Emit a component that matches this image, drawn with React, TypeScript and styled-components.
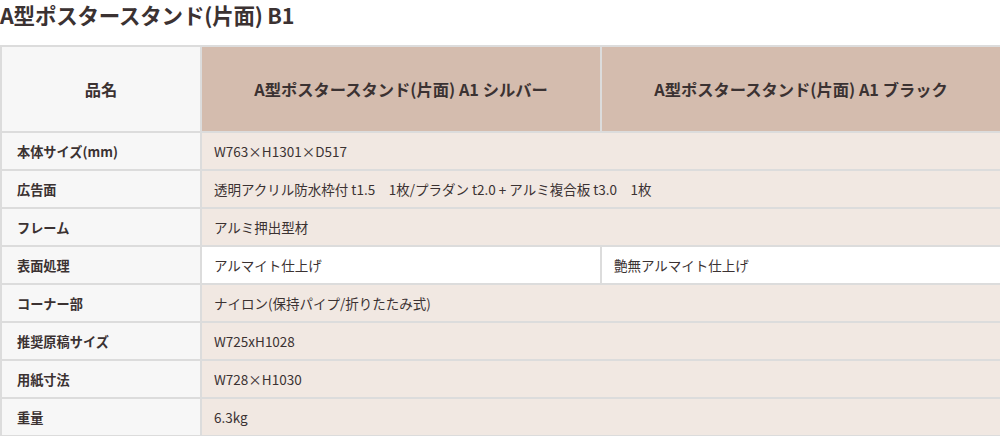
import React from 'react'
import { styled, createGlobalStyle } from 'styled-components'

const GlobalStyle = createGlobalStyle`
  body {
    margin: 0;
    background: #fff;
    font-family: "Noto Sans CJK JP", "Noto Sans", sans-serif;
    color: #3b3232;
  }
`

const Page = styled.div`
  width: 1000px;
`

const Title = styled.h2`
  margin: 0;
  height: 45px;
  font-size: 21.5px;
  font-weight: 700;
  line-height: 30px;
  letter-spacing: -0.2px;
`

const Table = styled.table`
  width: 1000px;
  border-collapse: collapse;
  table-layout: fixed;
  border: 2px solid #dcdcdc;
`

const HeadCell = styled.th<{ $label?: boolean }>`
  height: 84px;
  border: 2px solid #dcdcdc;
  background: ${p => (p.$label ? '#f7f7f7' : '#d4bcae')};
  font-size: 16.3px;
  font-weight: 700;
  text-align: center;
  padding: 0;
`

const Label = styled.th`
  height: 36px;
  border: 2px solid #dcdcdc;
  background: #f7f7f7;
  font-size: 13.2px;
  font-weight: 700;
  text-align: left;
  padding: 0 0 0 15px;
`

const Cell = styled.td<{ $plain?: boolean }>`
  border: 2px solid #dcdcdc;
  background: ${p => (p.$plain ? '#fff' : '#f1e8e2')};
  font-size: 13.5px;
  padding: 0 0 0 12px;
`

const rows: { label: string; values: string[] }[] = [
  { label: '本体サイズ(mm)', values: ['W763×H1301×D517'] },
  { label: '広告面', values: ['透明アクリル防水枠付 t1.5　1枚/プラダン t2.0 + アルミ複合板 t3.0　1枚'] },
  { label: 'フレーム', values: ['アルミ押出型材'] },
  { label: '表面処理', values: ['アルマイト仕上げ', '艶無アルマイト仕上げ'] },
  { label: 'コーナー部', values: ['ナイロン(保持パイプ/折りたたみ式)'] },
  { label: '推奨原稿サイズ', values: ['W725xH1028'] },
  { label: '用紙寸法', values: ['W728×H1030'] },
  { label: '重量', values: ['6.3kg'] },
]

export default function App() {
  return (
    <Page>
      <GlobalStyle />
      <Title>A型ポスタースタンド(片面) B1</Title>
      <Table>
        <colgroup>
          <col style={{ width: 200 }} />
          <col style={{ width: 400 }} />
          <col style={{ width: 400 }} />
        </colgroup>
        <thead>
          <tr>
            <HeadCell $label>品名</HeadCell>
            <HeadCell>A型ポスタースタンド(片面) A1 シルバー</HeadCell>
            <HeadCell>A型ポスタースタンド(片面) A1 ブラック</HeadCell>
          </tr>
        </thead>
        <tbody>
          {rows.map(r => (
            <tr key={r.label}>
              <Label>{r.label}</Label>
              {r.values.length === 1 ? (
                <Cell colSpan={2}>{r.values[0]}</Cell>
              ) : (
                r.values.map(v => (
                  <Cell key={v} $plain>
                    {v}
                  </Cell>
                ))
              )}
            </tr>
          ))}
        </tbody>
      </Table>
    </Page>
  )
}
